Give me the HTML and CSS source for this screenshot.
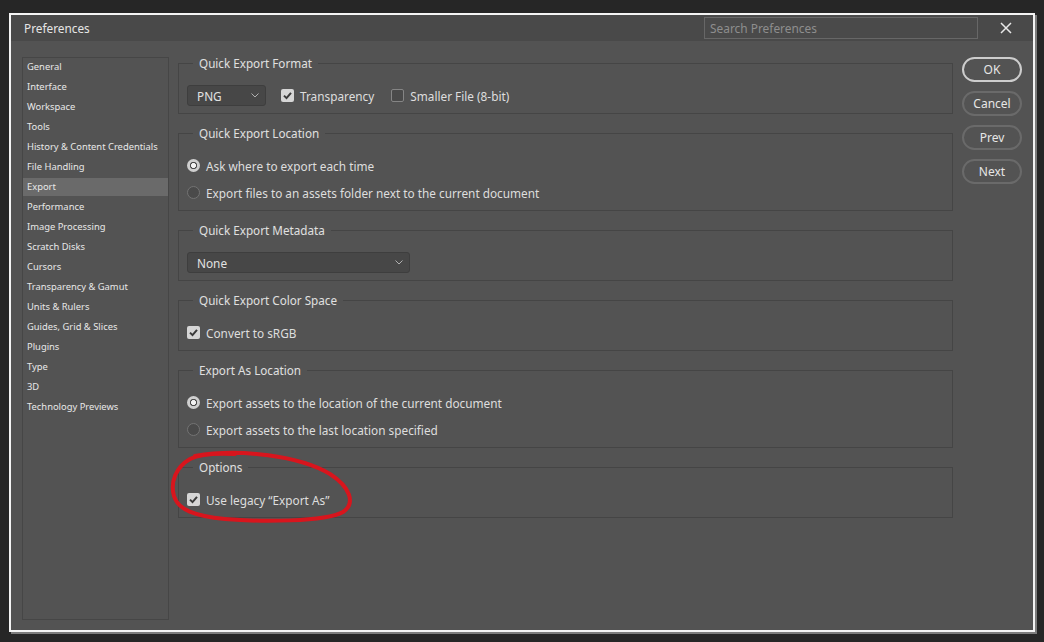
FILE: index.html
```html
<!DOCTYPE html>
<html lang="en">
<head>
<meta charset="utf-8">
<title>Preferences</title>
<link rel="stylesheet" href="styles.css">
</head>
<body>
<div class="stage">
  <div class="dialog">
    <header class="titlebar">
      <span class="title">Preferences</span>
      <input class="search" type="text" placeholder="Search Preferences">
      <button class="close" aria-label="Close">
        <svg viewBox="0 0 12 12" width="12" height="12"><path d="M1 1L11 11M11 1L1 11" stroke="#e8e8e8" stroke-width="1.5" fill="none"/></svg>
      </button>
    </header>
    <div class="body">
      <ul class="nav">
        <li>General</li>
        <li>Interface</li>
        <li>Workspace</li>
        <li>Tools</li>
        <li>History &amp; Content Credentials</li>
        <li>File Handling</li>
        <li class="sel">Export</li>
        <li>Performance</li>
        <li>Image Processing</li>
        <li>Scratch Disks</li>
        <li>Cursors</li>
        <li>Transparency &amp; Gamut</li>
        <li>Units &amp; Rulers</li>
        <li>Guides, Grid &amp; Slices</li>
        <li>Plugins</li>
        <li>Type</li>
        <li>3D</li>
        <li>Technology Previews</li>
      </ul>

      <main class="panel">
        <fieldset class="group">
          <legend>Quick Export Format</legend>
          <div class="row">
            <div class="select png"><span>PNG</span><svg class="chev" viewBox="0 0 8 5" width="8" height="5"><path d="M0.5 0.5L4 4L7.5 0.5" stroke="#b0b0b0" stroke-width="1" fill="none"/></svg></div>
            <label class="check on"><span class="box"><svg viewBox="0 0 13 13" width="13" height="13"><path d="M3 6.6L5.5 9.1L10 3.8" stroke="#3a3a3a" stroke-width="2" fill="none"/></svg></span>Transparency</label>
            <label class="check"><span class="box"></span>Smaller File (8-bit)</label>
          </div>
        </fieldset>

        <fieldset class="group">
          <legend>Quick Export Location</legend>
          <div class="row"><label class="radio on"><span class="dot"></span>Ask where to export each time</label></div>
          <div class="row"><label class="radio"><span class="dot"></span>Export files to an assets folder next to the current document</label></div>
        </fieldset>

        <fieldset class="group">
          <legend>Quick Export Metadata</legend>
          <div class="row">
            <div class="select meta"><span>None</span><svg class="chev" viewBox="0 0 8 5" width="8" height="5"><path d="M0.5 0.5L4 4L7.5 0.5" stroke="#b0b0b0" stroke-width="1" fill="none"/></svg></div>
          </div>
        </fieldset>

        <fieldset class="group">
          <legend>Quick Export Color Space</legend>
          <div class="row">
            <label class="check on"><span class="box"><svg viewBox="0 0 13 13" width="13" height="13"><path d="M3 6.6L5.5 9.1L10 3.8" stroke="#3a3a3a" stroke-width="2" fill="none"/></svg></span>Convert to sRGB</label>
          </div>
        </fieldset>

        <fieldset class="group">
          <legend>Export As Location</legend>
          <div class="row"><label class="radio on"><span class="dot"></span>Export assets to the location of the current document</label></div>
          <div class="row"><label class="radio"><span class="dot"></span>Export assets to the last location specified</label></div>
        </fieldset>

        <fieldset class="group">
          <legend>Options</legend>
          <div class="row">
            <label class="check on"><span class="box"><svg viewBox="0 0 13 13" width="13" height="13"><path d="M3 6.6L5.5 9.1L10 3.8" stroke="#3a3a3a" stroke-width="2" fill="none"/></svg></span>Use legacy “Export As”</label>
          </div>
        </fieldset>
      </main>

      <div class="buttons">
        <button class="btn primary">OK</button>
        <button class="btn">Cancel</button>
        <button class="btn">Prev</button>
        <button class="btn">Next</button>
      </div>
    </div>
  </div>

  <svg class="annotation" viewBox="0 0 1044 642" width="1044" height="642" aria-hidden="true">
    <path d="M195 456 C240 448, 300 456, 330 474 C350 487, 356 503, 343 512 C325 522, 260 522, 225 519 C195 516, 178 510, 174 496 C170 482, 176 467, 190 459 C200 454, 215 453, 235 454" stroke="#d8151d" stroke-width="4" fill="none" stroke-linecap="round"/>
  </svg>
</div>
</body>
</html>
```

FILE: styles.css
```css
* { box-sizing: border-box; }

html, body {
  margin: 0;
  padding: 0;
}

body {
  width: 1044px;
  height: 642px;
  overflow: hidden;
  background: #262626;
  font-family: "Noto Sans", "Open Sans", sans-serif;
  color: #dedede;
}

.stage {
  position: relative;
  width: 1044px;
  height: 642px;
  padding: 13px 0 0 9px;
}

.dialog {
  width: 1026px;
  height: 619px;
  border: 2px solid #f4f4f4;
  box-shadow: 2px 2px 0 #7c7c7c;
  background: #535353;
  display: flex;
  flex-direction: column;
}

/* Title bar */
.titlebar {
  height: 26px;
  flex: none;
  background: #494949;
  display: flex;
  align-items: center;
  padding: 0 6px 0 13px;
}

.title {
  flex: 1;
  font-size: 11.8px;
  color: #e6e6e6;
}

.search {
  width: 274px;
  height: 22px;
  margin-right: 6px;
  padding: 0 5px;
  background: #4a4a4a;
  border: 1px solid #676767;
  color: #dddddd;
  font: 11.9px "Noto Sans", "Open Sans", sans-serif;
  outline: none;
}

.search::placeholder { color: #8e8e8e; }

.close {
  width: 43px;
  height: 26px;
  padding: 0;
  border: 0;
  background: transparent;
  display: flex;
  align-items: center;
  justify-content: center;
}

/* Body grid */
.body {
  flex: 1;
  min-height: 0;
  display: grid;
  grid-template-columns: 147px 1fr 60px;
  column-gap: 9px;
  padding: 13px 11px 10px 11px;
}

/* Sidebar */
.nav {
  list-style: none;
  margin: 3px 0 0;
  padding: 0;
  border: 1px solid #464646;
}

.nav li {
  height: 20px;
  line-height: 17px;
  padding-left: 4px;
  font-size: 9.4px;
  color: #e8e8e8;
  white-space: nowrap;
}

.nav li.sel {
  background: #6a6a6a;
  line-height: 18px;
  height: 18px;
  margin-bottom: 2px;
}

/* Groups */
.panel { min-width: 0; }

.group {
  margin: 0 0 10px;
  padding: 10px 8px 4px;
  border: 1px solid #454545;
  min-width: 0;
}

.group legend {
  margin-left: 6px;
  padding: 0 6px;
  font-size: 11.7px;
  line-height: 18px;
  color: #e0e0e0;
}

.row {
  height: 27px;
  display: flex;
  align-items: center;
  font-size: 11.8px;
}

/* Select */
.select {
  height: 21px;
  display: flex;
  align-items: center;
  justify-content: space-between;
  padding: 0 6px 0 9px;
  background: #474747;
  border: 1px solid #3e3e3e;
  border-radius: 3px;
  color: #e2e2e2;
}

.select.png { width: 79px; margin-right: 15px; }
.select.meta { width: 223px; }

.chev { display: block; }

/* Checkbox */
.check {
  display: flex;
  align-items: center;
  gap: 6px;
  margin-right: 17px;
  color: #dedede;
}

.box {
  width: 13px;
  height: 13px;
  flex: none;
  border-radius: 2px;
  border: 1px solid #858585;
  background: #4a4a4a;
  display: flex;
  align-items: center;
  justify-content: center;
}

.check.on .box {
  background: #d6d6d6;
  border: 0;
}

.box svg { display: block; }

/* Radio */
.radio {
  display: flex;
  align-items: center;
  gap: 6px;
  color: #dedede;
}

.dot {
  width: 13px;
  height: 13px;
  flex: none;
  border-radius: 50%;
  border: 1px solid #737373;
  background: #4a4a4a;
}

.radio.on .dot {
  border: 0;
  background: radial-gradient(circle, #f2f2f2 0 2.2px, #4c4c4c 2.7px 3.4px, #cfcfcf 3.9px);
}

/* Buttons */
.buttons {
  margin-top: 3px;
  display: flex;
  flex-direction: column;
  gap: 9px;
}

.btn {
  height: 25px;
  padding: 0;
  border-radius: 13px;
  border: 2px solid #6a6a6a;
  background: transparent;
  color: #e6e6e6;
  font: 12px "Noto Sans", "Open Sans", sans-serif;
}

.btn.primary { border-color: #cdcdcd; }

/* Hand-drawn annotation overlay */
.annotation {
  position: absolute;
  left: 0;
  top: 0;
  pointer-events: none;
}
```
